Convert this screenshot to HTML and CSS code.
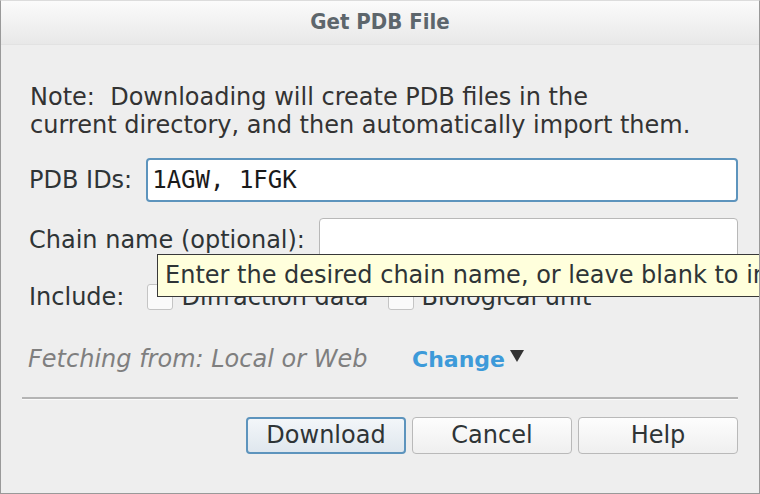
FILE: index.html
```html
<!DOCTYPE html>
<html>
<head>
<meta charset="utf-8">
<link rel="stylesheet" href="styles.css">
</head>
<body>
<div class="window">
  <div class="titlebar">Get PDB File</div>
  <div class="content">
    <div class="note">Note:&nbsp; Downloading will create PDB files in the<br>current directory, and then automatically import them.</div>
    <div class="row row-pdb">
      <span class="label">PDB IDs:</span>
      <div class="field field-focus">1AGW, 1FGK</div>
    </div>
    <div class="row row-chain">
      <span class="label">Chain name (optional):</span>
      <div class="field field-chain"></div>
    </div>
    <div class="row row-include">
      <span class="label label-include">Include:</span>
      <span class="check"></span><span class="check-label">Diffraction data</span>
      <span class="check"></span><span class="check-label">Biological unit</span>
    </div>
    <div class="row row-fetch">
      <span class="fetch">Fetching from: Local or Web</span>
      <span class="change">Change</span><span class="arrow"></span>
    </div>
    <div class="separator"></div>
    <div class="buttons">
      <div class="btn btn-default">Download</div>
      <div class="btn">Cancel</div>
      <div class="btn">Help</div>
    </div>
  </div>
  <div class="tooltip">Enter the desired chain name, or leave blank to include all chains</div>
</div>
</body>
</html>
```
FILE: styles.css
```css
html, body {
  margin: 0;
  padding: 0;
  background: #eeeeee;
}
body {
  width: 760px;
  height: 494px;
  overflow: hidden;
  font-family: "DejaVu Sans", sans-serif;
  font-size: 24px;
  color: #2e3436;
}
.window {
  position: relative;
  width: 760px;
  height: 494px;
  box-sizing: border-box;
  background: #eeeeee;
  border-top: 1px solid #dcdcdc;
  border-left: 1px solid #999999;
  border-right: 1px solid #999999;
  border-bottom: 1px solid #999999;
  overflow: hidden;
}
.titlebar {
  height: 43px;
  background: linear-gradient(#fbfbfb, #e8e8e8);
  border-bottom: 1px solid #e2e2e2;
  text-align: center;
  font-family: "DejaVu Sans Condensed", "DejaVu Sans", sans-serif;
  font-weight: bold;
  font-size: 22px;
  line-height: 41px;
  color: #5d666c;
}
.content {
  display: flex;
  flex-direction: column;
  padding: 0 21px 0 21px;
}
.note {
  margin-top: 38px;
  padding-left: 8px;
  line-height: 28px;
  color: #333333;
}
.row {
  display: flex;
  align-items: center;
  padding-left: 7px;
}
.row-pdb {
  margin-top: 19px;
  height: 44px;
}
.label {
  flex: none;
  margin-right: 14px;
}
.field {
  flex: 1;
  height: 44px;
  box-sizing: border-box;
  background: #ffffff;
  border-radius: 4px;
}
.field-focus {
  border: 2px solid #5d94bd;
  font-family: "DejaVu Sans Mono", monospace;
  font-size: 24px;
  line-height: 40px;
  padding-left: 4px;
  color: #1a1a1a;
}
.field-chain {
  border: 1px solid #b8b8b8;
}
.row-chain {
  margin-top: 16px;
  height: 44px;
}
.row-include {
  margin-top: 21px;
  height: 28px;
}
.label-include {
  margin-right: 23px;
}
.check {
  flex: none;
  width: 24px;
  height: 24px;
  background: #fafafa;
  border: 1px solid #c4c4c4;
  border-radius: 3px;
  margin-right: 8px;
}
.check-label {
  margin-right: 19px;
}
.row-fetch {
  margin-top: 32px;
  height: 32px;
  padding-left: 6px;
}
.fetch {
  font-style: italic;
  color: #7f7f7f;
  width: 384px;
}
.change {
  font-weight: bold;
  color: #3d9ad9;
  font-size: 22px;
}
.arrow {
  width: 0;
  height: 0;
  border-left: 7px solid transparent;
  border-right: 7px solid transparent;
  border-top: 12px solid #333333;
  margin-left: 5px;
  margin-top: -6px;
}
.separator {
  margin-top: 22px;
  height: 2px;
  background: #b4b4b4;
  border-bottom: 1px solid #fafafa;
  width: 716px;
  box-sizing: content-box;
}
.buttons {
  display: flex;
  justify-content: flex-end;
  gap: 6px;
  margin-top: 17px;
  width: 716px;
}
.btn {
  width: 160px;
  height: 37px;
  box-sizing: border-box;
  border: 1px solid #b9b9b9;
  border-radius: 4px;
  background: linear-gradient(#fdfdfd, #efefef);
  text-align: center;
  line-height: 34px;
  color: #2e3436;
}
.btn-default {
  border: 2px solid #5d94bd;
  background: linear-gradient(#f3f6f9, #dfe7ee);
  line-height: 33px;
}
.tooltip {
  position: absolute;
  left: 156px;
  top: 253px;
  height: 43px;
  box-sizing: border-box;
  padding-left: 7px;
  background: #ffffdc;
  border: 1px solid #383838;
  white-space: nowrap;
  line-height: 40px;
  color: #2e3436;
  width: 800px;
}
```
